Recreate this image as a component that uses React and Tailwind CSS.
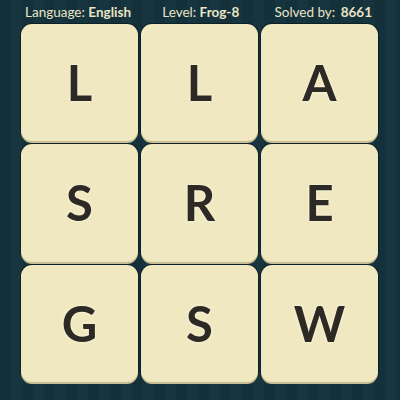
const LETTERS = ["L", "L", "A", "S", "R", "E", "G", "S", "W"];

const Tile = ({ letter }) => (
  <div className="flex items-center justify-center rounded-[11px] bg-[#f0e8c1] shadow-[0_2px_0_#c9bf94,0_0_0_1px_#0d2026]">
    <span
      className="text-[49px] font-bold leading-none text-[#2d2924] [text-shadow:0_0_3px_#fffbe6]"
      style={{ fontFamily: "Lato, 'Open Sans', sans-serif" }}
    >
      {letter}
    </span>
  </div>
);

export default function App() {
  return (
    <div
      className="flex h-[400px] w-[400px] flex-col bg-[#15313a] bg-[repeating-linear-gradient(90deg,#14303a_0px,#14303a_11px,#17353f_11px,#17353f_22px)]"
      style={{ fontFamily: "Lato, 'Open Sans', sans-serif" }}
    >
      <div className="flex h-[24px] items-center justify-between pl-[25px] pr-[28px] text-[13.5px] text-[#e9e4c6]">
        <span>
          Language: <b className="font-bold">English</b>
        </span>
        <span className="ml-[-4px]">
          Level: <b className="font-bold">Frog-8</b>
        </span>
        <span>
          Solved by: <b className="ml-0.5 font-bold">8661</b>
        </span>
      </div>
      <div className="ml-[21px] grid h-[358px] w-[357px] grid-cols-3 grid-rows-3 gap-[3px]">
        {LETTERS.map((l, i) => (
          <Tile key={i} letter={l} />
        ))}
      </div>
    </div>
  );
}
